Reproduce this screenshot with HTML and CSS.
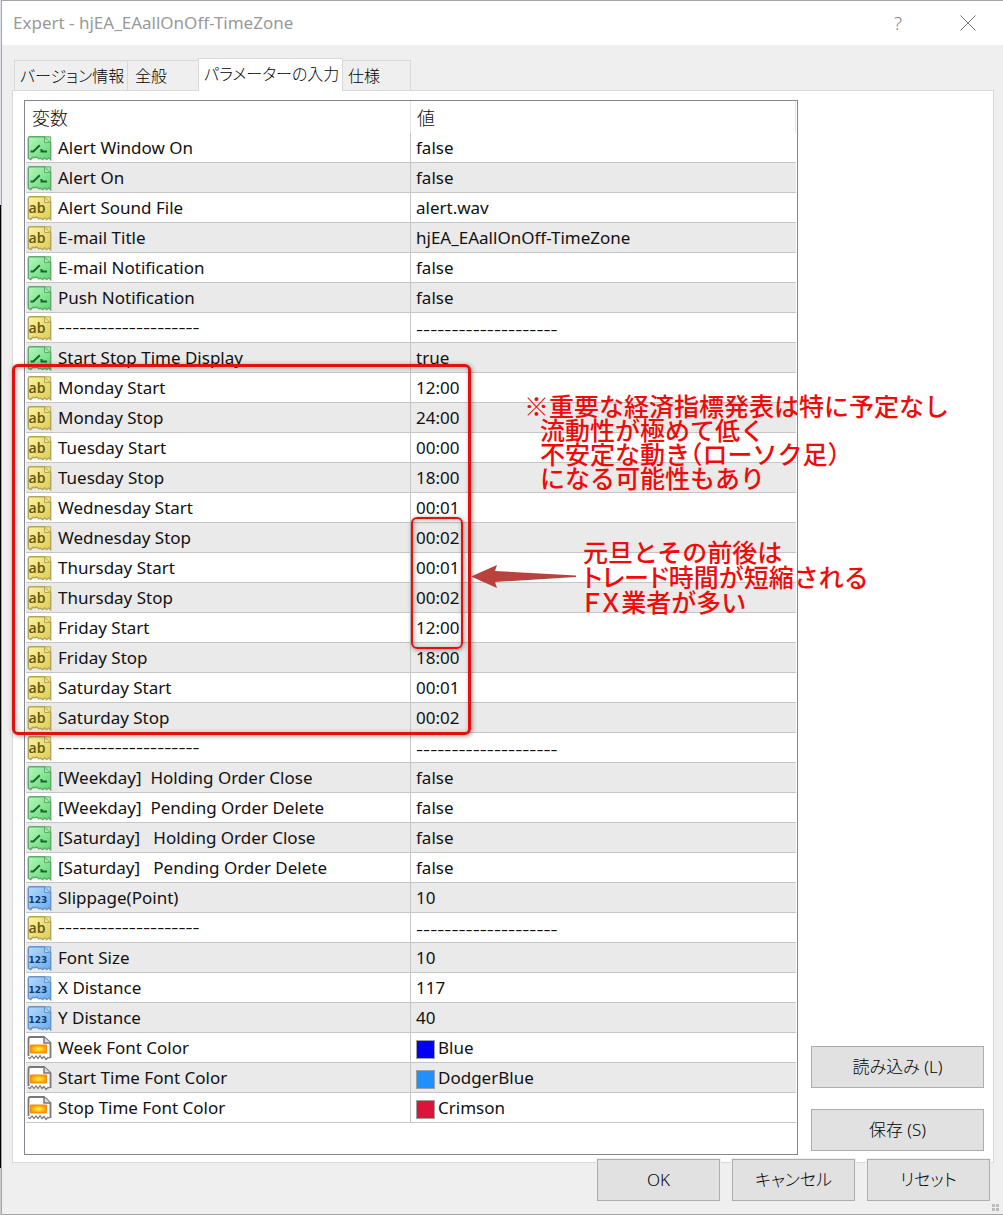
FILE: index.html
```html
<!DOCTYPE html>
<html lang="ja">
<head>
<meta charset="utf-8">
<title>Expert - hjEA_EAallOnOff-TimeZone</title>
<link rel="stylesheet" href="styles.css">
</head>
<body>
<svg class="gradients" aria-hidden="true">
  <defs>
    <linearGradient id="g-green" x1="0" y1="0" x2="1" y2="1"><stop offset="0" stop-color="#b4f8bd"/><stop offset="1" stop-color="#5fd672"/></linearGradient>
    <linearGradient id="g-yellow" x1="0" y1="0" x2="1" y2="1"><stop offset="0" stop-color="#fbf4a4"/><stop offset="1" stop-color="#dfcb52"/></linearGradient>
    <linearGradient id="g-blue" x1="0" y1="0" x2="1" y2="1"><stop offset="0" stop-color="#b5daff"/><stop offset="1" stop-color="#6cabea"/></linearGradient>
    <radialGradient id="g-orange"><stop offset="0" stop-color="#fff838"/><stop offset="1" stop-color="#ff9600"/></radialGradient>
  </defs>
</svg>
<svg class="symbols" aria-hidden="true">
  <symbol id="bool" viewBox="0 0 25 25">
    <path d="M3 .8h14.500l6.200 5.700v17.200l-2-1.700-2 1.700-2-1.700-2 1.700-2-1.500-2 .5-2-1.700-2 .7-2-.5-2 2.300-2.400-1.500V3Q1.300.8 3 .8z" fill="url(#g-green)" stroke="#62a86c" stroke-width="1.400"/>
    <path d="M17.500.8h6.200v5.700h-6.200z" fill="#a5e9ad" stroke="#5fae6b"/>
    <path d="M17.500 1l5.800 5.500" fill="none" stroke="#5fae6b"/>
    <path d="M3.500 15.500h2.800l6.500-6.300M14.500 13v2.500h5.500" fill="none" stroke="#17652b" stroke-width="2"/>
  </symbol>
  <symbol id="str" viewBox="0 0 25 25">
    <path d="M3 .8h14.500l6.200 5.700v17.200l-2-1.700-2 1.700-2-1.700-2 1.700-2-1.500-2 .5-2-1.700-2 .7-2-.5-2 2.300-2.400-1.500V3Q1.300.8 3 .8z" fill="url(#g-yellow)" stroke="#b1a55c" stroke-width="1.400"/>
    <path d="M17.500.8h6.200v5.700h-6.200z" fill="#efe48e" stroke="#b7a655"/>
    <path d="M17.500 1l5.800 5.500" fill="none" stroke="#b7a655"/>
    <text x="10" y="17" text-anchor="middle" class="glyph-ab">ab</text>
  </symbol>
  <symbol id="int" viewBox="0 0 25 25">
    <path d="M3 .8h14.500l6.200 5.700v17.200l-2-1.700-2 1.700-2-1.700-2 1.700-2-1.500-2 .5-2-1.700-2 .7-2-.5-2 2.300-2.400-1.500V3Q1.300.8 3 .8z" fill="url(#g-blue)" stroke="#6593c4" stroke-width="1.400"/>
    <path d="M17.500.8h6.200v5.700h-6.200z" fill="#a8cff5" stroke="#6797c8"/>
    <path d="M17.500 1l5.800 5.500" fill="none" stroke="#6797c8"/>
    <text x="11" y="17" text-anchor="middle" class="glyph-num">123</text>
  </symbol>
  <symbol id="col" viewBox="0 0 25 25">
    <path d="M3 1h14l6.500 6v16.500l-2-1.500-1.500 1.500-2-3-2 2-2-3-2 3-2-2.500-2 2.500-2-2.500-2 2.500-2.500-1.500V3Q1.500 1 3 1z" fill="#fff"/>
    <path d="M1.500 20V3Q1.500 1 3 1h14l6.500 6v15" fill="none" stroke="#777" stroke-width="1.800"/>
    <path d="M17 1v6h6.500" fill="#ddd" stroke="#777" stroke-width="1.500"/>
    <path d="M1 21.500l2 1 2-2.500 2 2.500 2-2.500 2 2.500 2-3 2 3 2-2 2 3 2-2 2 .5" fill="none" stroke="#777" stroke-width="1.200"/>
    <path d="M3.500 9h16v8h-16z" fill="url(#g-orange)" stroke="#f18a12"/>
  </symbol>
</svg>

<main class="dialog">
  <header class="titlebar">
    <h1>Expert - hjEA_EAallOnOff-TimeZone</h1>
    <button class="caption help" aria-label="ヘルプ">?</button>
    <button class="caption" aria-label="閉じる"><svg width="16" height="16" viewBox="0 0 16 16"><path d="M.5.5l15 15M15.500.5l-15 15" stroke="#777" fill="none"/></svg></button>
  </header>

  <div class="body">
    <div class="tabs" role="tablist">
      <button class="tab about" role="tab">バージョン情報</button>
      <button class="tab general" role="tab">全般</button>
      <button class="tab active" role="tab" aria-selected="true">パラメーターの入力</button>
      <button class="tab specs" role="tab">仕様</button>
    </div>

    <section class="panel">
      <div class="list">
        <table>
          <colgroup><col class="name-col"><col></colgroup>
          <thead><tr><th>変数</th><th>値</th></tr></thead>
          <tbody>
            <tr><td><svg class="icon"><use href="#bool"/></svg>Alert Window On</td><td>false</td></tr>
            <tr><td><svg class="icon"><use href="#bool"/></svg>Alert On</td><td>false</td></tr>
            <tr><td><svg class="icon"><use href="#str"/></svg>Alert Sound File</td><td>alert.wav</td></tr>
            <tr><td><svg class="icon"><use href="#str"/></svg>E-mail Title</td><td>hjEA_EAallOnOff-TimeZone</td></tr>
            <tr><td><svg class="icon"><use href="#bool"/></svg>E-mail Notification</td><td>false</td></tr>
            <tr><td><svg class="icon"><use href="#bool"/></svg>Push Notification</td><td>false</td></tr>
            <tr class="rule"><td><svg class="icon"><use href="#str"/></svg>--------------------</td><td>--------------------</td></tr>
            <tr><td><svg class="icon"><use href="#bool"/></svg>Start Stop Time Display</td><td>true</td></tr>
            <tr><td><svg class="icon"><use href="#str"/></svg>Monday Start</td><td>12:00</td></tr>
            <tr><td><svg class="icon"><use href="#str"/></svg>Monday Stop</td><td>24:00</td></tr>
            <tr><td><svg class="icon"><use href="#str"/></svg>Tuesday Start</td><td>00:00</td></tr>
            <tr><td><svg class="icon"><use href="#str"/></svg>Tuesday Stop</td><td>18:00</td></tr>
            <tr><td><svg class="icon"><use href="#str"/></svg>Wednesday Start</td><td>00:01</td></tr>
            <tr><td><svg class="icon"><use href="#str"/></svg>Wednesday Stop</td><td>00:02</td></tr>
            <tr><td><svg class="icon"><use href="#str"/></svg>Thursday Start</td><td>00:01</td></tr>
            <tr><td><svg class="icon"><use href="#str"/></svg>Thursday Stop</td><td>00:02</td></tr>
            <tr><td><svg class="icon"><use href="#str"/></svg>Friday Start</td><td>12:00</td></tr>
            <tr><td><svg class="icon"><use href="#str"/></svg>Friday Stop</td><td>18:00</td></tr>
            <tr><td><svg class="icon"><use href="#str"/></svg>Saturday Start</td><td>00:01</td></tr>
            <tr><td><svg class="icon"><use href="#str"/></svg>Saturday Stop</td><td>00:02</td></tr>
            <tr class="rule"><td><svg class="icon"><use href="#str"/></svg>--------------------</td><td>--------------------</td></tr>
            <tr><td><svg class="icon"><use href="#bool"/></svg>[Weekday]  Holding Order Close</td><td>false</td></tr>
            <tr><td><svg class="icon"><use href="#bool"/></svg>[Weekday]  Pending Order Delete</td><td>false</td></tr>
            <tr><td><svg class="icon"><use href="#bool"/></svg>[Saturday]   Holding Order Close</td><td>false</td></tr>
            <tr><td><svg class="icon"><use href="#bool"/></svg>[Saturday]   Pending Order Delete</td><td>false</td></tr>
            <tr><td><svg class="icon"><use href="#int"/></svg>Slippage(Point)</td><td>10</td></tr>
            <tr class="rule"><td><svg class="icon"><use href="#str"/></svg>--------------------</td><td>--------------------</td></tr>
            <tr><td><svg class="icon"><use href="#int"/></svg>Font Size</td><td>10</td></tr>
            <tr><td><svg class="icon"><use href="#int"/></svg>X Distance</td><td>117</td></tr>
            <tr><td><svg class="icon"><use href="#int"/></svg>Y Distance</td><td>40</td></tr>
            <tr><td><svg class="icon"><use href="#col"/></svg>Week Font Color</td><td><span class="swatch blue"></span>Blue</td></tr>
            <tr><td><svg class="icon"><use href="#col"/></svg>Start Time Font Color</td><td><span class="swatch dodger"></span>DodgerBlue</td></tr>
            <tr><td><svg class="icon"><use href="#col"/></svg>Stop Time Font Color</td><td><span class="swatch crimson"></span>Crimson</td></tr>
          </tbody>
        </table>
        <div class="mark schedule"></div>
        <div class="mark holiday"></div>
        <svg class="arrow" width="106" height="26" viewBox="0 0 106 26"><path d="M0 12.500L26 1l-2 6 81 4.500v1.500l-81 5 2 6z" fill="#b9423f"/></svg>
        <p class="note indicator"><span class="lead">※重要な経済指標発表は特に予定なし</span><br>流動性が極めて低く<br>不安定な動き（ローソク足）<br>になる可能性もあり</p>
        <p class="note shortened">元旦とその前後は<br><span class="kana">トレード</span>時間が短縮される<br><span class="kana">ＦＸ</span>業者が多い</p>
      </div>
      <div class="side">
        <button class="btn">読み込み (L)</button>
        <button class="btn">保存 (S)</button>
      </div>
    </section>

    <footer class="actions">
      <button class="btn">OK</button>
      <button class="btn">キャンセル</button>
      <button class="btn">リセット</button>
    </footer>
  </div>
  <svg class="grip" width="8" height="8" viewBox="0 0 8 8"><path d="M0 0h3v3H0zM4 0h3v3H4zM0 4h3v3H0zM4 4h3v3H4z" fill="#bcbcbc"/></svg>
</main>
</body>
</html>
```
FILE: styles.css
```css
* { box-sizing: border-box; }

body {
  margin: 0;
  padding-left: 1px;
  background: linear-gradient(#dde3e8 205px, #000 205px, #000 1168px, #ccc 1168px);
  color: #111;
  font: 17px/24px "Noto Sans", "Noto Sans CJK JP", sans-serif;
}

button {
  margin: 0;
  color: #000;
  font-family: inherit;
  font-size: 17px;
  font-weight: 300;
  line-height: 24px;
  font-feature-settings: "palt";
}

.gradients {
  position: absolute;
  width: 0;
  height: 0;
}

.symbols { display: none; }

.dialog {
  position: relative;
  min-height: 100vh;
  border: 1px solid #a5a5a5;
  border-right: 0;
  background: #efefef;
}

.titlebar {
  display: flex;
  align-items: center;
  height: 44px;
  padding: 0 12px 0 11px;
  background: #fff;
}

.titlebar h1 {
  flex: 1;
  margin: 0;
  color: #999;
  font-size: 17px;
  font-weight: 400;
}

.caption {
  display: flex;
  align-items: center;
  justify-content: center;
  width: 46px;
  height: 40px;
  padding: 0;
  border: 0;
  background: none;
  color: #888;
}

.caption.help { margin-right: 24px; font-size: 19px; }

.body { padding: 13px 9px 13px 10px; }

.tabs {
  display: flex;
  align-items: flex-end;
  padding-left: 2px;
}

.tab {
  height: 30px;
  padding: 0 5px;
  border: 1px solid #d9d9d9;
  border-width: 1px 1px 0 0;
  background: #efefef;
  font-size: 16px;
  text-align: left;
  white-space: nowrap;
}

.tab.about { width: 114px; border-left-width: 1px; }
.tab.general { width: 70px; border-right: 0; padding-left: 7px; }
.tab.specs { width: 68px; }

.tab.active {
  position: relative;
  width: 145px;
  height: 33px;
  margin-bottom: -1px;
  padding-bottom: 3px;
  border-left-width: 1px;
  background: #fff;
}

.panel {
  display: flex;
  gap: 13px;
  padding: 9px 9px 7px 11px;
  border: 1px solid #d9d9d9;
  background: #fff;
}

.list {
  position: relative;
  flex: 1;
  padding: 0 1px 31px;
  border: 1px solid #828790;
}

table {
  width: 100%;
  border-collapse: separate;
  border-spacing: 0;
  table-layout: fixed;
}

.name-col { width: 385px; }

th {
  height: 32px;
  padding: 2px 6px 0;
  border-right: 1px solid #e5e5e5;
  font-size: 18px;
  font-weight: 300;
  text-align: left;
}

td {
  height: 30px;
  padding: 1px 0 0 5px;
  border-bottom: 1px solid #c6c6c6;
  white-space: pre;
}

td:first-child {
  padding: 2px 0 0 1px;
  border-right: 1px solid #c6c6c6;
}

tbody tr:nth-child(even) { background: #eaeaea; }

.rule td {
  padding-top: 0;
  font-size: 22px;
  font-weight: 300;
}

.icon {
  width: 25px;
  height: 25px;
  margin-right: 6px;
  vertical-align: middle;
}

.glyph-ab {
  fill: #62560f;
  font: 600 14px "Open Sans", sans-serif;
}

.glyph-num {
  fill: #0d3b72;
  font: 700 9px "DejaVu Sans", sans-serif;
}

.swatch {
  display: inline-block;
  width: 19px;
  height: 19px;
  margin-right: 3px;
  border: 1px solid #a0a0a0;
  vertical-align: middle;
}

.blue { background: #00f; }
.dodger { background: #1e90ff; }
.crimson { background: #dc143c; }

.mark {
  position: absolute;
  border: 3px solid #e3100f;
  border-radius: 6px;
  box-shadow: 1px 1px 5px rgba(0, 0, 0, .4), inset 1px 1px 5px rgba(0, 0, 0, .3);
}

.schedule {
  top: 263px;
  left: -13px;
  width: 459px;
  height: 371px;
}

.holiday {
  top: 416px;
  left: 386px;
  width: 52px;
  height: 132px;
  border-width: 2px;
}

.arrow {
  position: absolute;
  top: 463px;
  left: 446px;
}

.note {
  position: absolute;
  margin: 0;
  color: #f00b0b;
  font: 500 25px/25px "Noto Sans CJK JP", sans-serif;
  font-feature-settings: "halt";
  white-space: nowrap;
}

.indicator {
  top: 292px;
  left: 515px;
  line-height: 24px;
}

.lead { margin-left: -16px; }
.shortened { top: 438px; left: 558px; }
.kana { font-feature-settings: "palt"; }

.side {
  display: flex;
  flex: 0 0 173px;
  flex-direction: column;
  justify-content: flex-end;
  gap: 21px;
  padding-bottom: 4px;
}

.btn {
  height: 42px;
  padding: 0;
  border: 1px solid #adadad;
  background: #e1e1e1;
}

.actions {
  position: relative;
  display: flex;
  justify-content: flex-end;
  gap: 12px;
  margin-top: -4px;
  padding-right: 4px;
}

.actions .btn {
  width: 123px;
  box-shadow: 0 0 0 1px #efefef;
}

.grip {
  position: absolute;
  right: 3px;
  bottom: 2px;
}
```
